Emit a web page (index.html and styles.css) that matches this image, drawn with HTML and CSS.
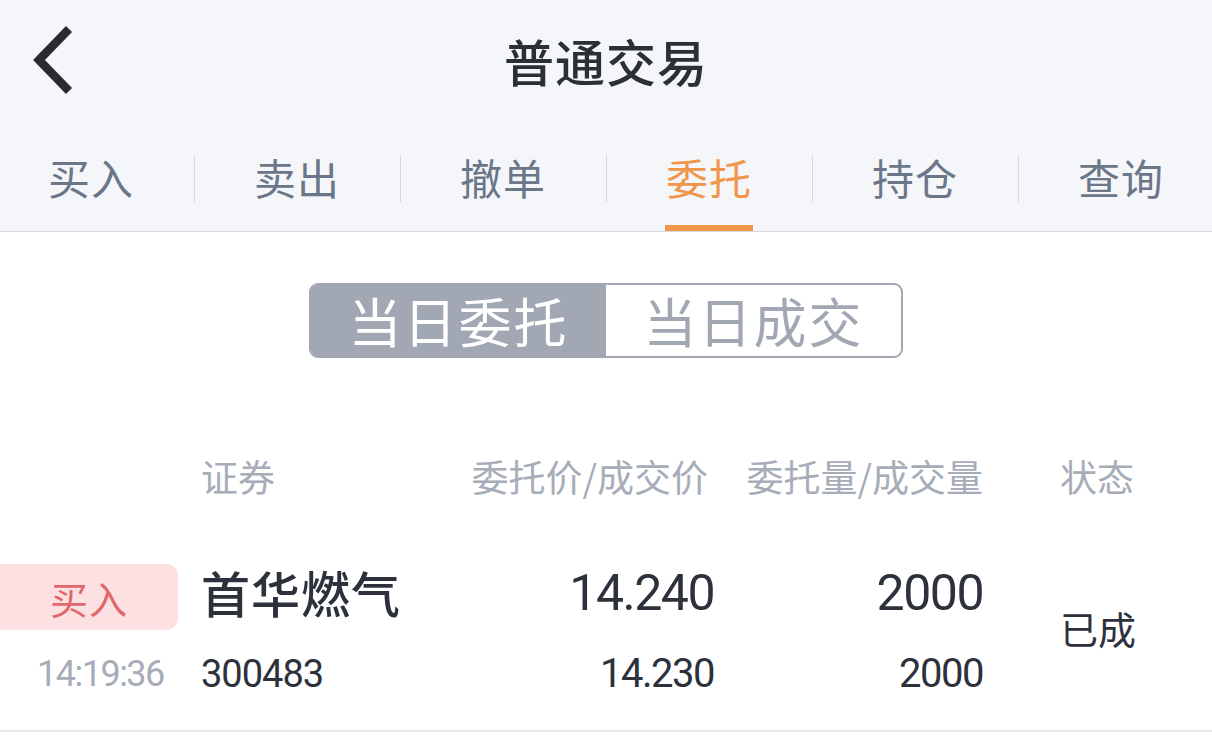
FILE: index.html
```html
<!DOCTYPE html>
<html lang="zh">
<head>
<meta charset="utf-8">
<title>普通交易</title>
<link rel="stylesheet" href="styles.css">
</head>
<body>
<div class="page">
  <header class="top">
    <div class="titlebar">
      <a class="back" aria-label="返回">
        <svg width="48" height="76" viewBox="0 0 48 76"><path d="M39 4 L9 35 L39 66" fill="none" stroke="#2b2b2d" stroke-width="8.5" stroke-linejoin="miter" stroke-linecap="butt"/></svg>
      </a>
      <h1 class="title">普通交易</h1>
    </div>
    <nav class="tabs">
      <div class="tab">买入</div>
      <div class="tab">卖出</div>
      <div class="tab">撤单</div>
      <div class="tab active">委托</div>
      <div class="tab">持仓</div>
      <div class="tab">查询</div>
    </nav>
  </header>

  <div class="seg-wrap">
    <div class="seg">
      <div class="seg-item on">当日委托</div>
      <div class="seg-item">当日成交</div>
    </div>
  </div>

  <div class="grid head">
    <div></div>
    <div class="h">证券</div>
    <div class="h r pr">委托价/成交价</div>
    <div class="h r">委托量/成交量</div>
    <div class="h st">状态</div>
  </div>

  <div class="grid row">
    <div class="cell">
      <div class="badge">买入</div>
      <div class="time">14:19:36</div>
    </div>
    <div class="cell">
      <div class="name">首华燃气</div>
      <div class="code">300483</div>
    </div>
    <div class="cell r">
      <div class="big">14.240</div>
      <div class="small">14.230</div>
    </div>
    <div class="cell r">
      <div class="big">2000</div>
      <div class="small">2000</div>
    </div>
    <div class="cell status">已成</div>
  </div>
</div>
</body>
</html>
```

FILE: styles.css
```css
* { box-sizing: border-box; }
html, body { margin: 0; padding: 0; background: #ffffff; }
body {
  font-family: "Noto Sans CJK SC", "Noto Sans", sans-serif;
  width: 1212px;
  height: 748px;
  overflow: hidden;
}
.top {
  background: #f4f6fa;
  border-bottom: 1px solid #d9dce2;
  overflow: hidden;
}
.titlebar {
  height: 125px;
  display: flex;
  align-items: center;
  justify-content: center;
  position: relative;
  padding-bottom: 6px;
}
.back {
  position: absolute;
  left: 30px;
  top: 25px;
  display: block;
}
.title {
  margin: 0;
  font-size: 50px;
  font-weight: 500;
  color: #2b2f36;
  line-height: 1;
  letter-spacing: 1px;
}
.tabs {
  display: flex;
  margin-left: -12px;
  height: 106px;
}
.tab {
  flex: 0 0 206px;
  position: relative;
  display: flex;
  justify-content: center;
  align-items: center;
  padding-bottom: 4px;
  font-size: 42px;
  color: #6b7789;
  letter-spacing: 1px;
}
.tab + .tab::before {
  content: "";
  position: absolute;
  left: 0;
  top: 30px;
  height: 47px;
  width: 1px;
  background: #d4d8de;
}
.tab.active { color: #f0954a; }
.tab.active::after {
  content: "";
  position: absolute;
  bottom: 0;
  left: 50%;
  transform: translateX(-50%);
  width: 88px;
  height: 6px;
  background: #f0954a;
}
.seg-wrap {
  display: flex;
  justify-content: center;
  padding-top: 51px;
}
.seg {
  display: flex;
  width: 594px;
  height: 75px;
  border: 2px solid #a1a8b4;
  border-radius: 9px;
  background: #ffffff;
}
.seg-item {
  flex: 1;
  display: flex;
  align-items: center;
  justify-content: center;
  font-size: 53px;
  line-height: 71px;
  letter-spacing: 2px;
  color: #a1a8b4;
}
.seg-item.on {
  background: #a1a8b4;
  color: #ffffff;
  border-radius: 6px 0 0 6px;
}
.grid {
  display: grid;
  grid-template-columns: 201px 240px 273px 269px 1fr;
}
.head {
  margin-top: 88px;
  height: 60px;
  align-items: center;
}
.h {
  font-size: 37px;
  color: #a6adb8;
  line-height: 60px;
  white-space: nowrap;
}
.r { text-align: right; }
.pr { padding-right: 6px; }
.st { padding-left: 77px; }
.row {
  padding-top: 58px;
  padding-bottom: 36px;
  border-bottom: 2px solid #ebebed;
}
.cell { display: flex; flex-direction: column; }
.cell.r { align-items: flex-end; }
.badge {
  width: 178px;
  height: 66px;
  background: #fde0e1;
  border-radius: 0 12px 12px 0;
  color: #e0686c;
  font-size: 38px;
  display: flex;
  align-items: center;
  justify-content: center;
  letter-spacing: 1px;
}
.time {
  margin-top: 24px;
  height: 40px;
  line-height: 40px;
  font-family: "Roboto", "Noto Sans", sans-serif;
  font-size: 36px;
  color: #a6adb8;
  padding-left: 37px;
  letter-spacing: -1.5px;
}
.name {
  height: 66px;
  line-height: 56px;
  font-size: 49px;
  font-weight: 500;
  color: #2c313b;
  letter-spacing: 1px;
}
.code {
  margin-top: 24px;
  height: 40px;
  line-height: 40px;
  font-family: "Roboto", "Noto Sans", sans-serif;
  font-size: 38px;
  color: #2c313b;
  letter-spacing: -1px;
}
.big {
  height: 66px;
  line-height: 58px;
  font-family: "Roboto", "Noto Sans", sans-serif;
  font-size: 50px;
  color: #2c313b;
  letter-spacing: -1.5px;
}
.small {
  margin-top: 24px;
  height: 40px;
  line-height: 40px;
  font-family: "Roboto", "Noto Sans", sans-serif;
  font-size: 40px;
  color: #2c313b;
  letter-spacing: -1.5px;
}
.status {
  align-self: center;
  padding-left: 77px;
  font-size: 38px;
  color: #2c313b;
  padding-bottom: 4px;
}
```
